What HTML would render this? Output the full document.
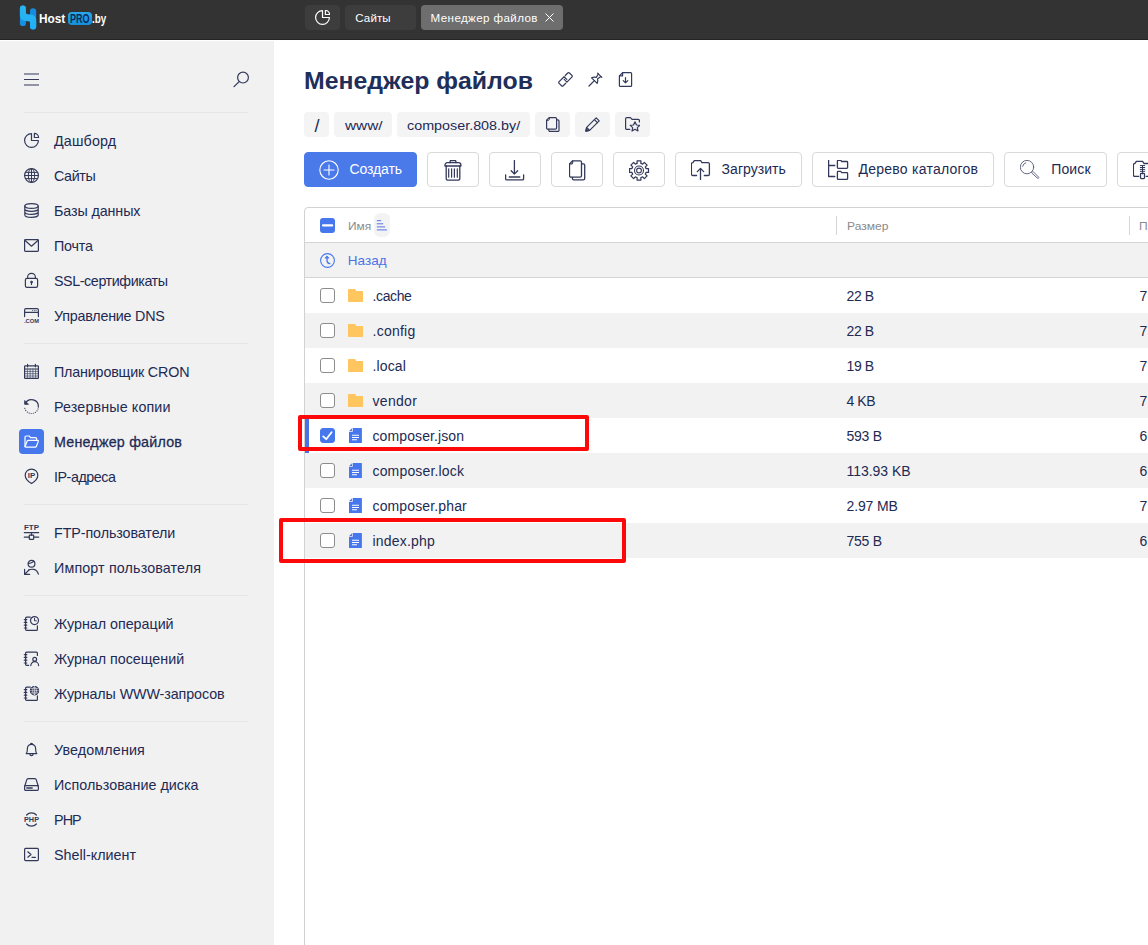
<!DOCTYPE html>
<html lang="ru">
<head>
<meta charset="utf-8">
<title>Менеджер файлов</title>
<style>
*{box-sizing:border-box;margin:0;padding:0}
html,body{width:1148px;height:945px;overflow:hidden;background:#fff}
body{font-family:"Liberation Sans",sans-serif;color:#1d2a54;position:relative;font-size:15px}
.abs{position:absolute}
#top{position:absolute;left:0;top:0;width:1148px;height:40px;background:#333;border-bottom:1px solid #242424}
.tab{position:absolute;top:5px;height:25px;border-radius:4px;background:#3d3d3d;color:#fff;font-size:12px;line-height:26px;white-space:nowrap}
.tab.act{background:#6e6e6e}
#side{position:absolute;left:0;top:41px;width:274px;height:904px;background:#f1f1f1}
.sep{position:absolute;left:24px;width:224px;height:1px;background:#e6e6e6}
.it{position:absolute;left:0;width:274px;height:35px;line-height:35px;font-size:13.5px;color:#1d2a54;white-space:nowrap}
.it span{position:absolute;left:54px;top:1px}
.it svg{position:absolute;left:24px;top:10px;width:15px;height:15px;overflow:visible}
.ic{fill:none;stroke:#33395a;stroke-width:1.2;stroke-linecap:round;stroke-linejoin:round}
h1{position:absolute;left:303.8px;top:63px;font-size:23px;line-height:36px;font-weight:bold;color:#202e5a;white-space:nowrap}
.chip{position:absolute;top:112px;height:25px;border-radius:4px;background:#f4f4f4;font-size:13.5px;line-height:27px;text-align:center;color:#1d2a54;white-space:nowrap}
.btn{position:absolute;top:152px;height:35px;border:1px solid #d9d9d9;border-radius:4px;background:#fff;font-size:14px;line-height:33.5px;color:#1d2a54;white-space:nowrap}
.btn svg{position:absolute}
.btn span{position:absolute;top:0}
#tbl{position:absolute;left:304px;top:207px;width:900px;height:800px;border:1px solid #d2d2d2;border-radius:4px 0 0 0;background:#fff}
.row{position:absolute;left:305px;width:843px;height:35px;font-size:14px;line-height:36px;color:#1d2a54;white-space:nowrap}
.row.g{background:#f2f2f2}
.row .nm{position:absolute;left:67.5px;top:0}
.row .sz{position:absolute;left:541.5px;top:0}
.row .pm{position:absolute;left:834.5px;top:0;letter-spacing:1.6px}
.cb{position:absolute;left:15px;top:10px;width:15px;height:15px;border:1px solid #8c8c8c;border-radius:3px;background:#fff}
.fi{position:absolute;left:43px;top:10px;width:15px;height:15px}
.red{position:absolute;border:4px solid #fe0909;border-radius:2px}
</style>
</head>
<body>
<div id="top">
<svg class="abs" style="left:18px;top:5px" width="20" height="26" viewBox="0 0 20 26">
<defs><linearGradient id="lg1" x1="0" y1="0" x2="0" y2="1"><stop offset="0" stop-color="#2ab4f2"/><stop offset="1" stop-color="#1fb0f6"/></linearGradient></defs>
<rect x="1.9" y="0.5" width="6" height="20.6" rx="2.9" fill="#1690e2"/>
<rect x="12" y="3.3" width="6.2" height="21.3" rx="3" fill="#158ce0"/>
<path d="M1.9 3.5Q1.9 0.5 4.9 0.5Q7.9 0.5 7.9 3.5L7.9 8.6Q10 9.6 12.4 9.6Q18.2 9.8 18.2 16L18.2 21.6Q18.2 24.6 15.1 24.6Q12 24.6 12 21.6L12 16.8Q10 15.9 7.6 15.9Q1.9 15.6 1.9 10Z" fill="url(#lg1)"/>
</svg>
<div class="abs" style="left:38.7px;top:10px;line-height:18px;color:#fff;white-space:nowrap;font-size:13px;font-weight:bold;transform:scaleX(0.9103);transform-origin:0 0">Host</div>
<div class="abs" style="left:68px;top:12px;width:23.5px;height:13px;border-radius:4px;background:linear-gradient(#2aa8ea,#1390d8)"></div>
<div class="abs" style="left:69.8px;top:10.3px;line-height:18px;color:#0b2b5c;white-space:nowrap;font-size:12.5px;font-weight:bold;transform:scaleX(0.7234);transform-origin:0 0">PRO</div>
<div class="abs" style="left:92px;top:10px;line-height:18px;color:#fff;white-space:nowrap;font-size:13px;font-weight:bold;transform:scaleX(0.7608);transform-origin:0 0">.by</div>
<div class="tab" style="left:305px;width:35px">
<svg class="abs" style="left:10px;top:5px" width="15" height="15" viewBox="0 0 15 15" fill="none" stroke="#fff" stroke-width="1.2" stroke-linejoin="round"><path d="M7.5 0.6A6.9 6.9 0 1 0 14.4 7.5H7.5Z"/><path d="M10.4 0.4V4.5H14.6A4.2 4.2 0 0 0 10.4 0.4Z"/></svg>
</div>
<div class="tab" style="left:345px;width:71px;padding-left:10.3px;font-size:11.6px;font-weight:normal;letter-spacing:0.064px">Сайты</div>
<div class="tab act" style="left:421px;width:142px;padding-left:9.6px;font-size:11.6px;font-weight:normal;letter-spacing:0.384px">Менеджер файлов
<svg class="abs" style="left:124px;top:8px" width="9" height="9" viewBox="0 0 9 9" stroke="#fff" stroke-width="1" fill="none"><path d="M0.5 0.5L8.5 8.5M8.5 0.5L0.5 8.5"/></svg>
</div>
</div>
<div id="side">
<svg class="abs ic" style="left:24px;top:32px" width="15" height="13" viewBox="0 0 15 13"><path d="M0 1H15M0 6.5H15M0 12H15" stroke-width="1.2" stroke-linecap="butt"/></svg>
<svg class="abs ic" style="left:233px;top:30px" width="17" height="17" viewBox="0 0 17 17"><circle cx="10" cy="6.6" r="5.4" stroke-width="1.2"/><path d="M6.2 10.6L1 15.6" stroke-width="1.3"/></svg>
<div class="sep" style="top:71px"></div>

<div class="it" style="top:82px"><svg class="ic" viewBox="0 0 15 15"><path d="M7.5 0.6A6.9 6.9 0 1 0 14.4 7.5H7.5Z"/><path d="M10.4 0.4V4.5H14.6A4.2 4.2 0 0 0 10.4 0.4Z"/></svg><span style="font-size:14.3px;font-weight:normal;letter-spacing:0.154px">Дашборд</span></div>
<div class="it" style="top:117px"><svg class="ic" viewBox="0 0 15 15"><circle cx="7.5" cy="7.5" r="6.9"/><ellipse cx="7.5" cy="7.5" rx="3.2" ry="6.9" stroke-width="1"/><path d="M7.5 0.6V14.4M1.6 4.4H13.4M0.6 7.5H14.4M1.6 10.6H13.4" stroke-width="1"/></svg><span style="font-size:14.3px;font-weight:normal;letter-spacing:-0.390px">Сайты</span></div>
<div class="it" style="top:152px"><svg class="ic" viewBox="0 0 15 15"><ellipse cx="7.5" cy="3" rx="6.7" ry="2.4"/><path d="M0.8 3V12C0.8 13.3 3.8 14.4 7.5 14.4S14.2 13.3 14.2 12V3M0.8 6C0.8 7.3 3.8 8.4 7.5 8.4S14.2 7.3 14.2 6M0.8 9C0.8 10.3 3.8 11.4 7.5 11.4S14.2 10.3 14.2 9"/></svg><span style="font-size:14.3px;font-weight:normal;letter-spacing:-0.100px">Базы данных</span></div>
<div class="it" style="top:187px"><svg class="ic" viewBox="0 0 15 15"><rect x="0.6" y="1.7" width="13.8" height="11.6" rx="0.8"/><path d="M0.9 2.3L7.5 8.2L14.1 2.3"/></svg><span style="font-size:14.3px;font-weight:normal;letter-spacing:-0.201px">Почта</span></div>
<div class="it" style="top:222px"><svg class="ic" viewBox="0 0 15 15"><rect x="1.4" y="5.4" width="12.2" height="9" rx="1.6"/><path d="M3.6 5.4V4.2A3.9 3.9 0 0 1 11.4 4.2V5.4"/><circle cx="7.5" cy="9" r="0.9" fill="#33395a" stroke-width="0.8"/><path d="M7.5 9.5V11.4"/></svg><span style="font-size:14.3px;font-weight:normal;letter-spacing:-0.416px">SSL-сертификаты</span></div>
<div class="it" style="top:257px"><svg class="ic" viewBox="0 0 15 15"><path d="M0.6 8.6V1.9A1.3 1.3 0 0 1 1.9 0.6H13.1A1.3 1.3 0 0 1 14.4 1.9V8.6M0.6 4.4H14.4"/><path d="M8.6 2.5H8.7M10.3 2.5H10.4M12 2.5H12.1" stroke-width="0.9"/><text x="0" y="14.6" font-family="Liberation Sans,sans-serif" font-size="5.6" font-weight="bold" fill="#33395a" stroke="none" textLength="15" lengthAdjust="spacingAndGlyphs">.COM</text></svg><span style="font-size:14.3px;font-weight:normal;letter-spacing:-0.217px">Управление DNS</span></div>
<div class="sep" style="top:302px"></div>

<div class="it" style="top:313px"><svg class="ic" viewBox="0 0 15 15"><rect x="0.6" y="1.8" width="13.8" height="12.6" rx="0.6"/><path d="M0.6 5H14.4M3.6 0.4V2.8M11.4 0.4V2.8" /><path d="M0.6 7.4H14.4M0.6 9.7H14.4M0.6 12H14.4M3.4 5V14.4M6.1 5V14.4M8.9 5V14.4M11.6 5V14.4" stroke-width="0.65"/></svg><span style="font-size:14.3px;font-weight:normal;letter-spacing:-0.171px">Планировщик CRON</span></div>
<div class="it" style="top:348px"><svg class="ic" viewBox="0 0 15 15"><path d="M1.35 4.47A6.9 6.9 0 0 1 14.38 8.08" stroke-width="1.25"/><path d="M13.98 9.96A6.9 6.9 0 0 1 0.60 7.60" stroke-dasharray="0.01 2.12" stroke-width="1.2"/><path d="M0.7 1.9V5.3H4.1Z" fill="#33395a" stroke-width="0.9"/></svg><span style="font-size:14.3px;font-weight:normal;letter-spacing:0.132px">Резервные копии</span></div>
<div class="abs" style="left:19px;top:388px;width:25px;height:25px;border-radius:4px;background:#4677ec"></div>
<div class="it" style="top:383px"><svg class="ic" viewBox="0 0 15 15" style="stroke:#fff"><path d="M1 12.4V3.2A1.2 1.2 0 0 1 2.2 2H5.2L6.6 3.6H11.4A1.2 1.2 0 0 1 12.6 4.8V6.4"/><path d="M1 12.8L3.2 7A1 1 0 0 1 4.1 6.4H13.6A0.7 0.7 0 0 1 14.3 7.4L12.4 12.3A1.2 1.2 0 0 1 11.3 13.1H1.4"/></svg><span style="-webkit-text-stroke:0.28px #1d2a54;font-size:14.3px;font-weight:normal;letter-spacing:0.200px">Менеджер файлов</span></div>
<div class="it" style="top:418px"><svg class="ic" viewBox="0 0 15 15"><path d="M7.5 14.6C7.5 14.6 1.2 10.4 1.2 6.4A6.3 6.3 0 0 1 13.8 6.4C13.8 10.4 7.5 14.6 7.5 14.6Z"/><text x="3.8" y="8.9" font-family="Liberation Sans,sans-serif" font-size="6.6" font-weight="bold" fill="#33395a" stroke="none" textLength="7.4" lengthAdjust="spacingAndGlyphs">IP</text></svg><span style="font-size:14.3px;font-weight:normal;letter-spacing:-0.453px">IP-адреса</span></div>
<div class="sep" style="top:463px"></div>

<div class="it" style="top:474px"><svg class="ic" viewBox="0 0 15 15"><text x="0" y="4.7" font-family="Liberation Sans,sans-serif" font-size="6.3" font-weight="bold" fill="#33395a" stroke="none" textLength="15" lengthAdjust="spacingAndGlyphs">FTP</text><path d="M0.3 7.6H14.7M0.3 12.2H5.2M9.8 12.2H14.7M7.5 7.6V10.2"/><rect x="5.3" y="10.2" width="4.4" height="4.2" rx="0.6"/></svg><span style="font-size:14.3px;font-weight:normal;letter-spacing:-0.084px">FTP-пользователи</span></div>
<div class="it" style="top:509px"><svg class="ic" viewBox="0 0 15 15"><circle cx="7.5" cy="3.8" r="3.4"/><path d="M4.4 3.4Q7 3.4 9.6 1.4"/><path d="M5 9.8Q7 9 9.8 9.4Q13.2 10 14.4 14.2"/><path d="M0.6 9.4V14.4H5.6M0.8 14.2L5 10"/></svg><span style="font-size:14.3px;font-weight:normal;letter-spacing:0.137px">Импорт пользователя</span></div>
<div class="sep" style="top:554px"></div>

<div class="it" style="top:565px"><svg class="ic" viewBox="0 0 15 15"><path d="M6.2 1.2H2.6A1 1 0 0 0 1.6 2.2V13.4A1 1 0 0 0 2.6 14.4H12.4A1 1 0 0 0 13.4 13.4V9.8"/><path d="M0.3 3.6H2.8M0.3 6.4H2.8M0.3 9.2H2.8M0.3 12H2.8"/><circle cx="10.5" cy="4.6" r="4"/><path d="M10.5 2.4V4.8H12.4" stroke-width="1"/></svg><span style="font-size:14.3px;font-weight:normal;letter-spacing:-0.017px">Журнал операций</span></div>
<div class="it" style="top:600px"><svg class="ic" viewBox="0 0 15 15"><path d="M13.4 4.4V2.2A1 1 0 0 0 12.4 1.2H2.6A1 1 0 0 0 1.6 2.2V13.4A1 1 0 0 0 2.6 14.4H4.6"/><path d="M0.3 3.6H2.8M0.3 6.4H2.8M0.3 9.2H2.8M0.3 12H2.8"/><circle cx="10.7" cy="8.2" r="1.9"/><path d="M6.8 14.6A3.9 3.9 0 0 1 14.6 14.6"/></svg><span style="font-size:14.3px;font-weight:normal;letter-spacing:-0.016px">Журнал посещений</span></div>
<div class="it" style="top:635px"><svg class="ic" viewBox="0 0 15 15"><path d="M6.2 1.2H2.6A1 1 0 0 0 1.6 2.2V13.4A1 1 0 0 0 2.6 14.4H12.4A1 1 0 0 0 13.4 13.4V9.8"/><path d="M0.3 3.6H2.8M0.3 6.4H2.8M0.3 9.2H2.8M0.3 12H2.8"/><circle cx="10.5" cy="4.7" r="4.1" fill="#33395a"/><path d="M10.5 0.8V8.6M6.6 4.7H14.4M7.4 2.6H13.6M7.4 6.8H13.6" stroke="#f1f1f1" stroke-width="0.6"/><ellipse cx="10.5" cy="4.7" rx="1.9" ry="3.9" stroke="#f1f1f1" stroke-width="0.6"/></svg><span style="font-size:14.3px;font-weight:normal;letter-spacing:-0.096px">Журналы WWW-запросов</span></div>
<div class="sep" style="top:680px"></div>

<div class="it" style="top:691px"><svg class="ic" viewBox="0 0 15 15"><path d="M2.2 11.6C3.4 10.4 3.4 9 3.4 6.4A4.1 4.1 0 0 1 11.6 6.4C11.6 9 11.6 10.4 12.8 11.6Z"/><path d="M6.4 2.4A1.1 1.1 0 0 1 8.6 2.4M5.9 12A1.6 1.6 0 0 0 9.1 12V11.7"/></svg><span style="font-size:14.3px;font-weight:normal;letter-spacing:0.146px">Уведомления</span></div>
<div class="it" style="top:726px"><svg class="ic" viewBox="0 0 15 15"><path d="M0.7 9.2L2.8 2.6A1.4 1.4 0 0 1 4.1 1.6H10.9A1.4 1.4 0 0 1 12.2 2.6L14.3 9.2"/><rect x="0.6" y="8.6" width="13.8" height="4.8" rx="1.1"/><path d="M2.8 11H8.2" stroke-width="1.3"/></svg><span style="font-size:14.3px;font-weight:normal;letter-spacing:0.024px">Использование диска</span></div>
<div class="it" style="top:761px"><svg class="ic" viewBox="0 0 15 15"><path d="M2.6 3A6.8 6.8 0 0 1 12.4 3M2.6 12A6.8 6.8 0 0 0 12.4 12"/><text x="0" y="9.9" font-family="Liberation Sans,sans-serif" font-size="6.8" font-weight="bold" fill="#33395a" stroke="none" textLength="15" lengthAdjust="spacingAndGlyphs">PHP</text></svg><span style="font-size:14.3px;font-weight:normal;letter-spacing:-0.869px">PHP</span></div>
<div class="it" style="top:796px"><svg class="ic" viewBox="0 0 15 15"><rect x="0.6" y="1.4" width="13.8" height="12.2" rx="1"/><path d="M3.8 4.8L7 7.5L3.8 10.2M8 10.4H11.4"/></svg><span style="font-size:14.3px;font-weight:normal;letter-spacing:0.025px">Shell-клиент</span></div>
</div>
<h1 style="font-size:23px;font-weight:bold;transform:scaleX(1.0800);transform-origin:0 0">Менеджер файлов</h1>
<svg class="abs ic" style="left:558px;top:72px" width="15" height="15" viewBox="0 0 15 15"><path d="M8.77 7.40L6.09 4.71L1.14 9.66Q0.29 10.51 1.14 11.36L3.54 13.76Q4.39 14.61 5.24 13.76L7.71 11.29"/><path d="M6.23 7.40L8.91 10.09L13.86 5.14Q14.71 4.29 13.86 3.44L11.46 1.04Q10.61 0.19 9.76 1.04L7.29 3.51"/></svg>
<svg class="abs ic" style="left:588px;top:72px" width="15" height="15" viewBox="0 0 15 15"><path d="M9.6 1.2L13.8 5.4"/><path d="M10.4 2L8.2 5.4Q5.8 4.8 3.6 5.8L9.2 11.4Q10.2 9.2 9.6 6.8L13 4.6"/><path d="M6.4 8.6L1 14"/></svg>
<svg class="abs ic" style="left:618px;top:72px" width="15" height="15" viewBox="0 0 15 15"><path d="M4.6 0.6H12.6A1 1 0 0 1 13.6 1.6V13.4A1 1 0 0 1 12.6 14.4H2.4A1 1 0 0 1 1.4 13.4V3.8Z"/><path d="M4.6 0.8V3.8H1.6"/><path d="M7.5 5.6V10.8M5.2 8.6L7.5 10.9L9.8 8.6"/></svg>

<div class="chip" style="left:304px;width:25px;padding-left:1px;font-size:18px;line-height:29px">/</div>
<div class="chip" style="left:334px;width:58px"><span class="abs" style="left:10.6px;top:0;font-size:13.5px;font-weight:normal;transform:scaleX(1.1394);transform-origin:0 0">www/</span></div>
<div class="chip" style="left:397px;width:133px"><span class="abs" style="left:10.4px;top:0;font-size:13.5px;font-weight:normal;transform:scaleX(1.0621);transform-origin:0 0">composer.808.by/</span></div>
<div class="chip" style="left:535px;width:35px"><svg class="abs ic" style="left:11px;top:5px" width="15" height="15" viewBox="0 0 15 15"><path d="M3.2 0.6H9.4A1.2 1.2 0 0 1 10.6 1.8V11A1.2 1.2 0 0 1 9.4 12.2H1.8A1.2 1.2 0 0 1 0.6 11V3.2Z"/><path d="M3.3 0.8V2.4A0.9 0.9 0 0 1 2.4 3.3H0.8" stroke-width="1"/><path d="M10.8 2.8H11.8A1.2 1.2 0 0 1 13 4V13.2A1.2 1.2 0 0 1 11.8 14.4H4A1.2 1.2 0 0 1 2.8 13.2V12.4"/></svg></div>
<div class="chip" style="left:575px;width:35px"><svg class="abs ic" style="left:10px;top:5px" width="15" height="15" viewBox="0 0 15 15"><path d="M11.2 0.8L14.2 3.8L4.6 13.4L0.8 14.2L1.6 10.4Z"/><path d="M9.4 2.6L12.4 5.6M1.8 10.6L4.4 13.2"/><path d="M0.9 14.1L1.4 11.8L3.2 13.6Z" fill="#33395a"/></svg></div>
<div class="chip" style="left:615px;width:35px"><svg class="abs ic" style="left:10px;top:5px" width="15" height="15" viewBox="0 0 15 15"><path d="M4.8 12.4H1.8A1.2 1.2 0 0 1 0.6 11.2V1.8A1.2 1.2 0 0 1 1.8 0.6H5.4L7 2.4H13.2A1.2 1.2 0 0 1 14.4 3.6V5"/><path d="M10 4.8L11.5 8L14.8 8.4L12.3 10.6L13 14L10 12.3L7 14L7.7 10.6L5.2 8.4L8.5 8Z"/></svg></div>

<div class="btn" style="left:304px;width:113px;background:#4a79ea;border-color:#4a79ea;color:#fff"><svg class="abs" style="left:13.5px;top:7px" width="20" height="20" viewBox="0 0 20 20" fill="none" stroke="#fff" stroke-width="1.1" stroke-linecap="round"><circle cx="10" cy="10" r="9.2"/><path d="M10 5V15M5 10H15"/></svg><span style="left:44.4px;font-size:14px;font-weight:normal;letter-spacing:-0.074px">Создать</span></div>
<div class="btn" style="left:427px;width:52px"><svg class="abs ic" style="left:16px;top:6.5px;stroke-width:1.3" width="18" height="21" viewBox="0 0 18 21"><path d="M1 6V5A2.3 2.3 0 0 1 3.3 2.7H14.6A2.3 2.3 0 0 1 16.9 5V6Z"/><path d="M6.1 2.7V1.5A1 1 0 0 1 7.1 0.5H10.9A1 1 0 0 1 11.9 1.5V2.7"/><path d="M2.2 6V18.4A1.8 1.8 0 0 0 4 20.2H14A1.8 1.8 0 0 0 15.8 18.4V6"/><path d="M4.7 8.8V17.2M7.6 8.8V17.2M10.4 8.8V17.2M13.3 8.8V17.2" stroke-width="1.2"/></svg></div>
<div class="btn" style="left:489px;width:52px"><svg class="abs ic" style="left:15px;top:6.5px;stroke-width:1.3" width="20" height="21" viewBox="0 0 20 21"><path d="M9.4 0.6V14M6.2 10.8L9.4 14.1L12.6 10.8"/><path d="M0.6 14.8V18.7A1.2 1.2 0 0 0 1.8 19.9H17.4A1.2 1.2 0 0 0 18.6 18.7V14.8M4.3 17H14.8"/></svg></div>
<div class="btn" style="left:551px;width:52px"><svg class="abs ic" style="left:17px;top:6.5px;stroke-width:1.3" width="18" height="21" viewBox="0 0 18 21"><path d="M3.6 0.8H11.1A1.4 1.4 0 0 1 12.5 2.2V15.7A1.4 1.4 0 0 1 11.1 17.1H1.9A1.4 1.4 0 0 1 0.5 15.7V3.9Z"/><path d="M3.7 0.9V2.8A1.1 1.1 0 0 1 2.6 3.9H0.6" stroke-width="1.1"/><path d="M12.7 3.9H14.3A1.4 1.4 0 0 1 15.7 5.3V18.5A1.4 1.4 0 0 1 14.3 19.9H4.8A1.4 1.4 0 0 1 3.4 18.5V17.3"/></svg></div>
<div class="btn" style="left:613px;width:52px"><svg class="abs ic" style="left:15px;top:6.5px;stroke-width:1.25" width="21" height="21" viewBox="0 0 21 21"><path d="M8.11 3.45L8.07 0.99L11.93 0.99L11.89 3.45A7.3 7.3 0 0 1 13.65 4.18L15.35 2.41L18.09 5.15L16.32 6.85A7.3 7.3 0 0 1 17.05 8.61L19.51 8.57L19.51 12.43L17.05 12.39A7.3 7.3 0 0 1 16.32 14.15L18.09 15.85L15.35 18.59L13.65 16.82A7.3 7.3 0 0 1 11.89 17.55L11.93 20.01L8.07 20.01L8.11 17.55A7.3 7.3 0 0 1 6.35 16.82L4.65 18.59L1.91 15.85L3.68 14.15A7.3 7.3 0 0 1 2.95 12.39L0.49 12.43L0.49 8.57L2.95 8.61A7.3 7.3 0 0 1 3.68 6.85L1.91 5.15L4.65 2.41L6.35 4.18A7.3 7.3 0 0 1 8.11 3.45Z"/><circle cx="10" cy="10.5" r="4.5" stroke-width="1.1"/><circle cx="10" cy="10.5" r="2.4" stroke-width="1.1"/></svg></div>
<div class="btn" style="left:675px;width:127px"><svg class="abs ic" style="left:15px;top:7px;stroke-width:1.3" width="20" height="20" viewBox="0 0 20 20"><path d="M5.6 15.5H1.7A1.3 1.3 0 0 1 0.4 14.2V3.9A1.3 1.3 0 0 1 1.7 2.6H2L3.3 0.5H9.6L10.9 2.6H17.1A1.3 1.3 0 0 1 18.4 3.9V14.2A1.3 1.3 0 0 1 17.1 15.5H13.3"/><path d="M9.5 19.4V8.6M6.3 11.6L9.5 8.4L12.7 11.6"/></svg><span style="left:45.6px;font-size:14px;font-weight:normal;letter-spacing:0.029px">Загрузить</span></div>
<div class="btn" style="left:812px;width:182px"><svg class="abs ic" style="left:15px;top:7px;stroke-width:1.3" width="21" height="20" viewBox="0 0 21 20"><path d="M0.6 0.3V16.5H6.8M0.6 5.5H6.8"/><path d="M9.4 1.1A0.8 0.8 0 0 1 10.2 0.3H12.7L13.7 1.5H18.8A0.8 0.8 0 0 1 19.6 2.3V7.5A0.8 0.8 0 0 1 18.8 8.3H10.2A0.8 0.8 0 0 1 9.4 7.5Z"/><path d="M9.4 12.2A0.8 0.8 0 0 1 10.2 11.4H12.7L13.7 12.6H18.8A0.8 0.8 0 0 1 19.6 13.4V18.6A0.8 0.8 0 0 1 18.8 19.4H10.2A0.8 0.8 0 0 1 9.4 18.6Z"/></svg><span style="left:45.6px;font-size:14px;font-weight:normal;letter-spacing:0.232px">Дерево каталогов</span></div>
<div class="btn" style="left:1004px;width:103px"><svg class="abs" style="left:15px;top:7px" width="20" height="20" viewBox="0 0 20 20" fill="none" stroke="#565a78" stroke-width="0.9" stroke-linecap="round" stroke-linejoin="round"><circle cx="7" cy="7.1" r="6.7"/><path d="M2.6 6.4A4.4 4.4 0 0 1 5.8 2.8"/><path d="M11.8 12.5L12.9 11.4L18.6 17.1A0.78 0.78 0 0 1 17.5 18.2Z"/></svg><span style="left:46.2px;font-size:14px;font-weight:normal;letter-spacing:0.141px">Поиск</span></div>
<div class="btn" style="left:1117px;width:127px"><svg class="abs ic" style="left:15px;top:7px;stroke-width:1.3" width="20" height="20" viewBox="0 0 20 20"><path d="M5.6 16.4H1.7A1.3 1.3 0 0 1 0.4 15.1V4.8A1.3 1.3 0 0 1 1.7 3.5H2L3.3 1.4H9.6L10.9 3.5H17.1A1.3 1.3 0 0 1 18.4 4.8V15.1A1.3 1.3 0 0 1 17.1 16.4H13.3"/><path d="M7.3 5.6H11.7M7.3 7.5H11.7M7.3 9.4H11.7M7.3 11.3H11.7M9.5 5.6V14" stroke-width="1"/><rect x="7.5" y="13.4" width="4" height="5.2" rx="0.8"/></svg></div>

<div id="tbl"></div>
<div class="abs" style="left:305px;top:242px;width:843px;height:1px;background:#d5d5d5"></div>
<div class="abs" style="left:305px;top:243px;width:843px;height:34px;background:#f2f2f2"></div>
<div class="abs" style="left:305px;top:277px;width:843px;height:1px;background:#d5d5d5"></div>
<div class="abs" style="left:320px;top:218px;width:15px;height:15px;border-radius:3px;background:#4677ec"></div>
<svg class="abs" style="left:320px;top:218px" width="15" height="15" viewBox="0 0 15 15"><path d="M3 7.4H12.2" stroke="#fff" stroke-width="2.1" stroke-linecap="round"/></svg>
<div class="abs" style="left:347.8px;top:216px;line-height:20px;color:#8a8a8a;white-space:nowrap;font-size:10.6px;font-weight:normal;transform:scaleX(1.1240);transform-origin:0 0">Имя</div>
<div class="abs" style="left:374px;top:213px;width:16.4px;height:24.4px;border-radius:6px;background:#f3f3f3"></div>
<svg class="abs" style="left:376px;top:219px" width="12" height="12" viewBox="0 0 12 12" fill="none" stroke="#5673e2" stroke-width="1" stroke-linecap="butt"><path d="M0.8 1.7H5.2M0.8 4.8H7.2M0.8 7.9H9.2M0.8 10.9H11"/></svg>
<div class="abs" style="left:836px;top:216px;width:1px;height:19px;background:#d5d5d5"></div>
<div class="abs" style="left:846.6px;top:216px;line-height:20px;color:#8a8a8a;white-space:nowrap;font-size:10.6px;font-weight:normal;transform:scaleX(1.1367);transform-origin:0 0">Размер</div>
<div class="abs" style="left:1129px;top:216px;width:1px;height:19px;background:#d5d5d5"></div>
<div class="abs" style="left:1139.4px;top:216px;line-height:20px;color:#8a8a8a;white-space:nowrap;font-size:10.6px;font-weight:normal;transform:scaleX(1.1359);transform-origin:0 0">Права</div>
<svg class="abs" style="left:320px;top:253px" width="15" height="15" viewBox="0 0 15 15" fill="none" stroke="#4677ec" stroke-width="1.1" stroke-linecap="round" stroke-linejoin="round"><circle cx="7.5" cy="7.5" r="6.9"/><path d="M7 4.4V7.2Q7.1 10.4 9.8 10.7" stroke-width="1.3"/><path d="M5.2 4.8L7 2.9L8.8 4.8Z" fill="#4677ec" stroke-width="0.8"/></svg>
<div class="abs" style="left:347.8px;top:243px;line-height:35px;color:#4a72e6;white-space:nowrap;font-size:13.5px;font-weight:normal;letter-spacing:0.062px">Назад</div>

<div class="row" style="top:278px"><i class="cb"></i><svg class="fi" viewBox="0 0 15 15"><path d="M-0.1 2A1 1 0 0 1 0.9 1H6.6A1 1 0 0 1 7.5 1.6L8.2 3.1H14.3A0.9 0.9 0 0 1 15.2 4V13.1A0.9 0.9 0 0 1 14.3 14H0.8A0.9 0.9 0 0 1 -0.1 13.1Z" fill="#ffc55e"/></svg><span class="nm" style="font-size:14px;font-weight:normal;letter-spacing:-0.375px">.cache</span><span class="sz" style="font-size:14px;font-weight:normal;letter-spacing:-0.403px">22 B</span><span class="pm">755</span></div>
<div class="row g" style="top:313px"><i class="cb"></i><svg class="fi" viewBox="0 0 15 15"><path d="M-0.1 2A1 1 0 0 1 0.9 1H6.6A1 1 0 0 1 7.5 1.6L8.2 3.1H14.3A0.9 0.9 0 0 1 15.2 4V13.1A0.9 0.9 0 0 1 14.3 14H0.8A0.9 0.9 0 0 1 -0.1 13.1Z" fill="#ffc55e"/></svg><span class="nm" style="font-size:14px;font-weight:normal;letter-spacing:0.250px">.config</span><span class="sz" style="font-size:14px;font-weight:normal;letter-spacing:-0.403px">22 B</span><span class="pm">755</span></div>
<div class="row" style="top:348px"><i class="cb"></i><svg class="fi" viewBox="0 0 15 15"><path d="M-0.1 2A1 1 0 0 1 0.9 1H6.6A1 1 0 0 1 7.5 1.6L8.2 3.1H14.3A0.9 0.9 0 0 1 15.2 4V13.1A0.9 0.9 0 0 1 14.3 14H0.8A0.9 0.9 0 0 1 -0.1 13.1Z" fill="#ffc55e"/></svg><span class="nm" style="font-size:14px;font-weight:normal;letter-spacing:0.119px">.local</span><span class="sz" style="font-size:14px;font-weight:normal;letter-spacing:-0.403px">19 B</span><span class="pm">755</span></div>
<div class="row g" style="top:383px"><i class="cb"></i><svg class="fi" viewBox="0 0 15 15"><path d="M-0.1 2A1 1 0 0 1 0.9 1H6.6A1 1 0 0 1 7.5 1.6L8.2 3.1H14.3A0.9 0.9 0 0 1 15.2 4V13.1A0.9 0.9 0 0 1 14.3 14H0.8A0.9 0.9 0 0 1 -0.1 13.1Z" fill="#ffc55e"/></svg><span class="nm" style="font-size:14px;font-weight:normal;letter-spacing:0.298px">vendor</span><span class="sz" style="font-size:14px;font-weight:normal;letter-spacing:-0.440px">4 KB</span><span class="pm">755</span></div>
<div class="row" style="top:418px"><div class="abs" style="left:0;top:0;width:4px;height:35px;background:#4a72e4"></div><i class="cb" style="background:#4677ec;border-color:#4677ec"></i><svg class="abs" style="left:17px;top:13px;overflow:visible" width="11" height="9" viewBox="0 0 11 9" fill="none" stroke="#fff" stroke-width="1.8" stroke-linecap="round" stroke-linejoin="round"><path d="M1.2 5.4L4.2 8.2L9.6 1.2"/></svg><svg class="fi" viewBox="0 0 15 15"><path d="M4.7 0H13.4A0.5 0.5 0 0 1 13.9 0.5V14.4A0.5 0.5 0 0 1 13.4 14.9H1.5A0.5 0.5 0 0 1 1 14.4V3.7H4.7Z" fill="#4677ec"/><path d="M1.3 2.9L3.9 0.3V2.9Z" fill="#3f6ae0"/><path d="M4 7.2H11M4 9.5H11M4 11.7H9" stroke="#fff" stroke-width="1.1"/></svg><span class="nm" style="font-size:14px;font-weight:normal;letter-spacing:0.101px">composer.json</span><span class="sz" style="font-size:14px;font-weight:normal;letter-spacing:-0.239px">593 B</span><span class="pm">644</span></div>
<div class="row g" style="top:453px"><i class="cb"></i><svg class="fi" viewBox="0 0 15 15"><path d="M4.7 0H13.4A0.5 0.5 0 0 1 13.9 0.5V14.4A0.5 0.5 0 0 1 13.4 14.9H1.5A0.5 0.5 0 0 1 1 14.4V3.7H4.7Z" fill="#4677ec"/><path d="M1.3 2.9L3.9 0.3V2.9Z" fill="#3f6ae0"/><path d="M4 7.2H11M4 9.5H11M4 11.7H9" stroke="#fff" stroke-width="1.1"/></svg><span class="nm" style="font-size:14px;font-weight:normal;letter-spacing:0.163px">composer.lock</span><span class="sz" style="font-size:14px;font-weight:normal;letter-spacing:-0.040px">113.93 KB</span><span class="pm">644</span></div>
<div class="row" style="top:488px"><i class="cb"></i><svg class="fi" viewBox="0 0 15 15"><path d="M4.7 0H13.4A0.5 0.5 0 0 1 13.9 0.5V14.4A0.5 0.5 0 0 1 13.4 14.9H1.5A0.5 0.5 0 0 1 1 14.4V3.7H4.7Z" fill="#4677ec"/><path d="M1.3 2.9L3.9 0.3V2.9Z" fill="#3f6ae0"/><path d="M4 7.2H11M4 9.5H11M4 11.7H9" stroke="#fff" stroke-width="1.1"/></svg><span class="nm" style="font-size:14px;font-weight:normal;letter-spacing:0.138px">composer.phar</span><span class="sz" style="font-size:14px;font-weight:normal;letter-spacing:-0.134px">2.97 MB</span><span class="pm">755</span></div>
<div class="row g" style="top:523px"><i class="cb"></i><svg class="fi" viewBox="0 0 15 15"><path d="M4.7 0H13.4A0.5 0.5 0 0 1 13.9 0.5V14.4A0.5 0.5 0 0 1 13.4 14.9H1.5A0.5 0.5 0 0 1 1 14.4V3.7H4.7Z" fill="#4677ec"/><path d="M1.3 2.9L3.9 0.3V2.9Z" fill="#3f6ae0"/><path d="M4 7.2H11M4 9.5H11M4 11.7H9" stroke="#fff" stroke-width="1.1"/></svg><span class="nm" style="font-size:14px;font-weight:normal;letter-spacing:0.209px">index.php</span><span class="sz" style="font-size:14px;font-weight:normal;letter-spacing:-0.239px">755 B</span><span class="pm">644</span></div>

<div class="red" style="left:298px;top:415px;width:291px;height:36px"></div>
<div class="red" style="left:279px;top:518px;width:347px;height:45px"></div>
</body>
</html>
